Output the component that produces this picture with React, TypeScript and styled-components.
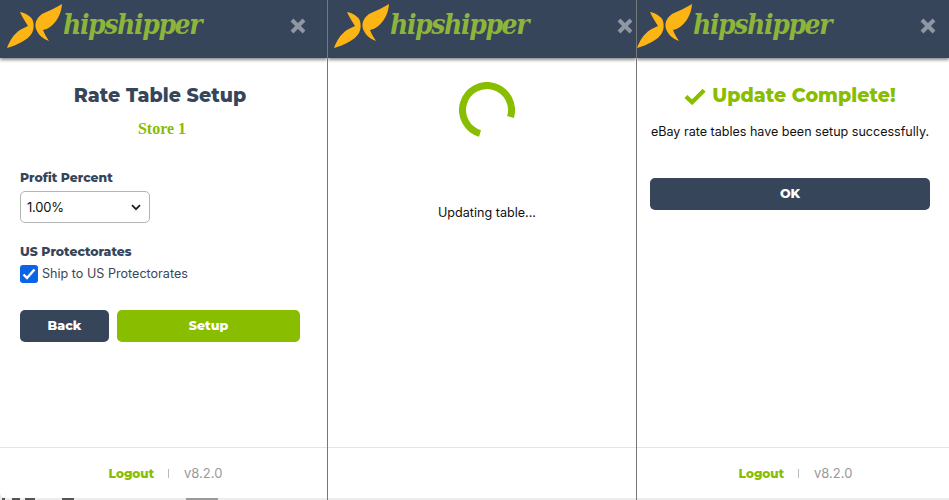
import React from "react";
import styled, { createGlobalStyle } from "styled-components";

const GlobalStyle = createGlobalStyle`
  html, body {
    margin: 0;
    padding: 0;
    background: #ededed;
  }
  body {
    font-family: "Montserrat", "Inter", "Liberation Sans", sans-serif;
    overflow: hidden;
  }
`;

const NAVY = "#36455a";
const GREEN = "#88bd00";
const TEXT_FONT = `"Inter", "Liberation Sans", sans-serif`;

const Row = styled.div`
  display: flex;
  width: 949px;
  height: 500px;
`;

const Panel = styled.section<{ $width: number; $divider?: boolean }>`
  width: ${p => p.$width}px;
  flex: none;
  box-sizing: border-box;
  display: flex;
  flex-direction: column;
  overflow: hidden;
  background: #ededed;
  border-right: ${p => (p.$divider ? "1px solid #777" : "none")};
`;

const Header = styled.header`
  height: 58px;
  flex: none;
  background: ${NAVY};
  box-shadow: 0 2px 3px rgba(0, 0, 0, 0.45);
  position: relative;
`;

const HeaderInner = styled.div<{ $shift: number }>`
  width: 320px;
  height: 58px;
  margin-left: ${p => p.$shift}px;
  display: flex;
  align-items: flex-start;
`;

const LogoMark = styled.svg`
  flex: none;
  width: 56px;
  height: 46px;
  margin: 4px 0 0 7px;
`;

const LogoText = styled.span`
  font-family: "DejaVu Serif", "Liberation Serif", serif;
  font-style: italic;
  font-weight: 700;
  font-stretch: condensed;
  font-size: 28px;
  line-height: 44px;
  color: #8db53a;
  margin: 3px 0 0 0;
  letter-spacing: -1.4px;
`;

const Close = styled.svg`
  flex: none;
  width: 16px;
  height: 16px;
  margin: 18px 14px 0 auto;
`;

const Main = styled.main`
  flex: 1;
  background: #fff;
`;

const Content = styled.div<{ $shift: number }>`
  width: 280px;
  margin-left: ${p => p.$shift + 20}px;
  display: flex;
  flex-direction: column;
`;

const Title = styled.h1<{ $green?: boolean }>`
  margin: 24px 0 0;
  font-size: 19px;
  line-height: 28px;
  font-weight: 800;
  letter-spacing: 0.05px;
  text-align: center;
  white-space: nowrap;
  color: ${p => (p.$green ? GREEN : NAVY)};
  display: flex;
  justify-content: center;
  align-items: center;
  gap: 6px;
`;

const StoreName = styled.div`
  margin-top: 9px;
  padding-left: 4px;
  font-family: "Liberation Serif", serif;
  font-weight: 700;
  font-size: 16px;
  line-height: 20px;
  text-align: center;
  color: ${GREEN};
`;

const Label = styled.label<{ $top: number }>`
  margin-top: ${p => p.$top}px;
  font-size: 12.4px;
  line-height: 18px;
  font-weight: 800;
  color: ${NAVY};
`;

const Select = styled.div`
  box-sizing: border-box;
  margin-top: 4px;
  width: 130px;
  height: 32px;
  border: 1px solid #b4b4b4;
  border-radius: 5px;
  padding: 0 8px 0 6px;
  display: flex;
  align-items: center;
  justify-content: space-between;
  font-family: ${TEXT_FONT};
  font-size: 13px;
  letter-spacing: -0.2px;
  color: #111;
`;

const CheckRow = styled.div`
  margin-top: 4px;
  display: flex;
  align-items: center;
  gap: 4px;
  font-family: ${TEXT_FONT};
  font-size: 12.6px;
  line-height: 18px;
  color: #3b4656;
`;

const CheckBox = styled.span`
  width: 18px;
  height: 18px;
  border-radius: 3px;
  background: #0b63e5;
  display: flex;
  align-items: center;
  justify-content: center;
`;

const ButtonRow = styled.div`
  margin-top: 27px;
  display: flex;
  gap: 8px;
`;

const Button = styled.button<{ $primary?: boolean; $grow?: boolean; $wide?: boolean }>`
  height: 32px;
  width: ${p => (p.$wide ? "100%" : "89px")};
  flex: ${p => (p.$grow ? 1 : "none")};
  border: none;
  border-radius: 5px;
  padding: 0 0 1px;
  background: ${p => (p.$primary ? GREEN : NAVY)};
  color: #fff;
  font-family: inherit;
  font-size: 12.6px;
  font-weight: 800;
`;

const Spinner = styled.svg`
  display: block;
  width: 56px;
  height: 56px;
  margin: 24px auto 0;
`;

const Status = styled.p`
  margin: 66px 0 0;
  font-family: ${TEXT_FONT};
  font-size: 12.6px;
  line-height: 18px;
  text-align: center;
  color: #111;
`;

const Message = styled.p`
  margin: 13px 0 0;
  font-family: ${TEXT_FONT};
  font-size: 12.55px;
  line-height: 18px;
  text-align: center;
  white-space: nowrap;
  color: #111;
`;

const OkWrap = styled.div`
  margin-top: 37px;
`;

const Footer = styled.footer<{ $round?: boolean }>`
  height: 50px;
  flex: none;
  background: #fff;
  border-top: 1px solid #e4e4e8;
  border-bottom-left-radius: ${p => (p.$round ? "6px" : "0")};
`;

const FooterInner = styled.div<{ $shift: number }>`
  width: 320px;
  height: 50px;
  margin-left: ${p => p.$shift}px;
  padding-left: 11px;
  box-sizing: border-box;
  display: flex;
  align-items: center;
  justify-content: center;
  font-size: 12px;
`;

const Logout = styled.a`
  color: ${GREEN};
  font-weight: 800;
`;

const Sep = styled.span`
  width: 1px;
  height: 9px;
  margin: 0 15px 0 14px;
  background: #bbb;
`;

const Version = styled.span`
  color: #999;
  font-family: ${TEXT_FONT};
  font-size: 13px;
`;

// sliver of whatever sits behind the popup, along the bottom edge
const BackdropEdge = styled.div`
  height: 2px;
  flex: none;
  display: flex;
  align-items: flex-start;
  gap: 2px;
`;

const BackdropBit = styled.span<{ $width: number; $gap?: number; $tone?: string }>`
  width: ${p => p.$width}px;
  margin-left: ${p => p.$gap ?? 0}px;
  height: 2px;
  background: ${p => p.$tone ?? "#555"};
`;

const BrandHeader = ({ shift }: { shift: number }) => (
  <Header>
    <HeaderInner $shift={shift}>
      <LogoMark viewBox="0 0 56 46">
        <path
          fill="#fdb515"
          d="M55 0C54.5 9 50 18 43 23C41 24.5 38 25.5 36 26C37.5 30 40 34 42 37C36 35 30 30 28.5 23C28 17 31 13 35 10C41 7 49 4 55 0ZM13 8C19 9 25 13 26 17C27 21 27 25 25 29C21 36 10 41 0 44C3 36 7 30 13 26C16 24 19 23 21 22C18 17 15 13 13 8Z"
        />
      </LogoMark>
      <LogoText>hipshipper</LogoText>
      <Close viewBox="0 0 16 16">
        <path d="M2 2L14 14M14 2L2 14" stroke="#8f97a3" strokeWidth="4" fill="none" />
      </Close>
    </HeaderInner>
  </Header>
);

const PanelFooter = ({ shift, empty, round }: { shift: number; empty?: boolean; round?: boolean }) => (
  <Footer $round={round}>
    {!empty && (
      <FooterInner $shift={shift}>
        <Logout>Logout</Logout>
        <Sep />
        <Version>v8.2.0</Version>
      </FooterInner>
    )}
  </Footer>
);

export default function App() {
  return (
    <>
      <GlobalStyle />
      <Row>
        <Panel $width={328} $divider>
          <BrandHeader shift={0} />
          <Main>
            <Content $shift={0}>
              <Title>Rate Table Setup</Title>
              <StoreName>Store 1</StoreName>
              <Label $top={30}>Profit Percent</Label>
              <Select>
                1.00%
                <svg width="10" height="7" viewBox="0 0 10 7">
                  <path d="M1 1.2L5 5.2L9 1.2" stroke="#222" strokeWidth="1.8" fill="none" />
                </svg>
              </Select>
              <Label $top={20}>US Protectorates</Label>
              <CheckRow>
                <CheckBox>
                  <svg width="14" height="12" viewBox="0 0 14 12">
                    <path d="M1.5 6.5L5 10L12.5 1.5" stroke="#fff" strokeWidth="2.4" fill="none" />
                  </svg>
                </CheckBox>
                Ship to US Protectorates
              </CheckRow>
              <ButtonRow>
                <Button>Back</Button>
                <Button $primary $grow>Setup</Button>
              </ButtonRow>
            </Content>
          </Main>
          <PanelFooter shift={0} round />
          <BackdropEdge>
            <BackdropBit $width={3} $gap={2} />
            <BackdropBit $width={8} $gap={5} />
            <BackdropBit $width={10} $gap={3} />
            <BackdropBit $width={12} $gap={25} />
            <BackdropBit $width={32} $gap={110} $tone="#999" />
          </BackdropEdge>
        </Panel>
        <Panel $width={309} $divider>
          <BrandHeader shift={-1} />
          <Main>
            <Content $shift={-1}>
              <Spinner viewBox="0 0 56 56">
                <path d="M51.5 35A24.5 24.5 0 1 0 21 51.5" stroke={GREEN} strokeWidth="7" fill="none" />
              </Spinner>
              <Status>Updating table...</Status>
            </Content>
          </Main>
          <PanelFooter shift={-1} empty />
          <BackdropEdge />
        </Panel>
        <Panel $width={312}>
          <BrandHeader shift={-7} />
          <Main>
            <Content $shift={-7}>
              <Title $green>
                <svg width="22" height="17" viewBox="0 0 23 17">
                  <path d="M2 8.5L8.5 14.5L21 2" stroke={GREEN} strokeWidth="4.4" fill="none" />
                </svg>
                Update Complete!
              </Title>
              <Message>eBay rate tables have been setup successfully.</Message>
              <OkWrap>
                <Button $wide>OK</Button>
              </OkWrap>
            </Content>
          </Main>
          <PanelFooter shift={-7} />
          <BackdropEdge />
        </Panel>
      </Row>
    </>
  );
}
